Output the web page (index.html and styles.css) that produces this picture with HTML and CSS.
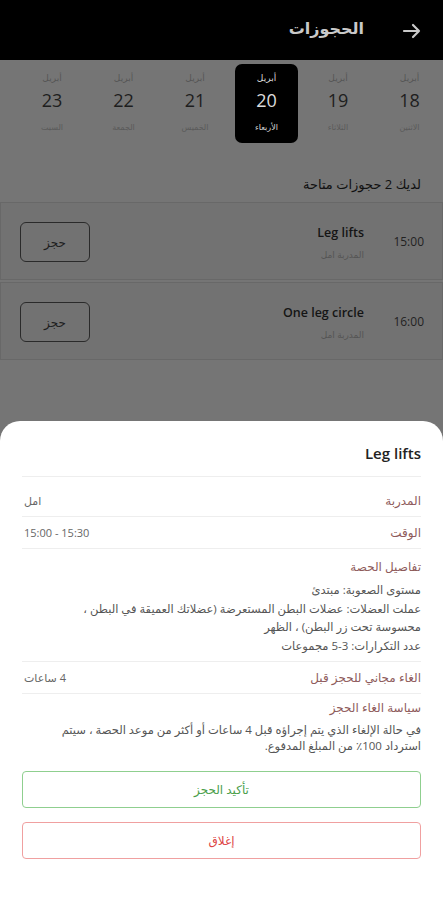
FILE: index.html
```html
<!DOCTYPE html>
<html lang="ar" dir="rtl">
<head>
    <meta charset="UTF-8">
    <meta name="viewport" content="width=device-width, initial-scale=1.0">
    <title>الحجوزات</title>
    <link rel="stylesheet" href="styles.css">
</head>
<body>
<div class="app">
    <div class="topbar">
        <svg class="back" width="20" height="20" viewBox="0 0 20 20"><path d="M2 10h15M11 4l6 6-6 6" fill="none" stroke="#c9c9c9" stroke-width="2.2" stroke-linecap="round" stroke-linejoin="round"/></svg>
        <h1>الحجوزات</h1>
    </div>

    <div class="dates">
        <div class="day"><span class="month">أبريل</span><span class="num">18</span><span class="name">الاثنين</span></div>
        <div class="day"><span class="month">أبريل</span><span class="num">19</span><span class="name">الثلاثاء</span></div>
        <div class="day active"><span class="month">أبريل</span><span class="num">20</span><span class="name">الأربعاء</span></div>
        <div class="day"><span class="month">أبريل</span><span class="num">21</span><span class="name">الخميس</span></div>
        <div class="day"><span class="month">أبريل</span><span class="num">22</span><span class="name">الجمعة</span></div>
        <div class="day"><span class="month">أبريل</span><span class="num">23</span><span class="name">السبت</span></div>
    </div>

    <p class="count">لديك 2 حجوزات متاحة</p>

    <div class="sessions">
        <div class="session">
            <span class="time">15:00</span>
            <div class="info">
                <div class="title" dir="ltr">Leg lifts</div>
                <div class="coach">المدربة امل</div>
            </div>
            <button class="book">حجز</button>
        </div>
        <div class="session">
            <span class="time">16:00</span>
            <div class="info">
                <div class="title" dir="ltr">One leg circle</div>
                <div class="coach">المدربة امل</div>
            </div>
            <button class="book">حجز</button>
        </div>
    </div>
</div>

<div class="sheet">
    <h2 dir="ltr">Leg lifts</h2>
    <div class="row first">
        <span class="label">المدربة</span>
        <span class="value">امل</span>
    </div>
    <div class="row">
        <span class="label">الوقت</span>
        <span class="value" dir="ltr">15:00 - 15:30</span>
    </div>
    <div class="block details">
        <div class="label">تفاصيل الحصة</div>
        <p>مستوى الصعوبة: مبتدئ<br>
        عملت العضلات: عضلات البطن المستعرضة (عضلاتك العميقة في البطن ،<br>
        محسوسة تحت زر البطن) ، الظهر<br>
        عدد التكرارات: 3-5 مجموعات</p>
    </div>
    <div class="row">
        <span class="label">الغاء مجاني للحجز قبل</span>
        <span class="value">4 ساعات</span>
    </div>
    <div class="block policy">
        <div class="label">سياسة الغاء الحجز</div>
        <p>في حالة الإلغاء الذي يتم إجراؤه قبل 4 ساعات أو أكثر من موعد الحصة ، سيتم<br>
        استرداد 100٪ من المبلغ المدفوع.</p>
    </div>
    <button class="btn confirm">تأكيد الحجز</button>
    <button class="btn close">إغلاق</button>
</div>
</body>
</html>
```
FILE: styles.css
```css
body {
    margin: 0;
    font-family: "Open Sans", "DejaVu Sans", sans-serif;
    background-color: #757575;
    color: #1e1e1e;
}
.app {
    height: 900px;
    background-color: #757575;
}
.topbar {
    height: 60px;
    background-color: #000;
    display: flex;
    align-items: center;
    padding-right: 21px;
    gap: 38px;
}
.topbar h1 {
    margin: 0 0 4px 0;
    font-size: 16px;
    font-weight: 700;
    color: #c9c9c9;
}
.back {
    transform: translateY(1px);
}

/* date strip */
.dates {
    display: flex;
    gap: 8.5px;
    padding: 4px 2px 0 0;
    height: 86px;
}
.day {
    width: 63px;
    height: 79px;
    border-radius: 7px;
    display: flex;
    flex-direction: column;
    align-items: center;
    box-sizing: border-box;
    padding-top: 7px;
}
.day .month {
    font-size: 9px;
    color: #555;
    line-height: 13px;
}
.day .num {
    font-size: 18px;
    line-height: 24px;
    margin-top: 4px;
    color: #1e1e1e;
}
.day .name {
    font-size: 8px;
    color: #5a5a5a;
    line-height: 12px;
    margin-top: 9px;
}
.day.active {
    background-color: #000;
}
.day.active .month,
.day.active .name {
    color: #d8d8d8;
}
.day.active .num {
    color: #dcdcdc;
}

.count {
    margin: 0;
    padding: 25px 22px 0 0;
    height: 27px;
    font-size: 13px;
    font-weight: 400;
    color: #111;
}

/* session list */
.sessions {
    display: flex;
    flex-direction: column;
    gap: 2px;
}
.session {
    height: 76px;
    border: 1px solid #686868;
    background-color: #727272;
    display: flex;
    align-items: center;
    padding: 0 18px 0 19px;
}
.time {
    width: 60px;
    font-size: 12px;
    color: #222;
    margin-top: 1px;
}
.info {
    flex: 1;
    margin-top: 3px;
}
.info .title {
    text-align: right;
    font-size: 12.5px;
    font-weight: 600;
    color: #151515;
    line-height: 18px;
}
.info .coach {
    font-size: 9px;
    color: #555;
    margin-top: 6px;
}
.book {
    width: 70px;
    height: 40px;
    border: 1px solid #2a2a2a;
    border-radius: 6px;
    background: transparent;
    font-family: inherit;
    font-size: 12px;
    color: #1e1e1e;
    margin-top: 2px;
}

/* bottom sheet */
.sheet {
    position: fixed;
    left: 0;
    right: 0;
    bottom: 0;
    top: 421px;
    background-color: #fff;
    border-radius: 20px 20px 0 0;
    padding: 22px 22px 0 22px;
    box-sizing: border-box;
}
.sheet h2 {
    margin: 0;
    text-align: right;
    font-size: 15px;
    font-weight: 600;
    color: #222;
    line-height: 20px;
    padding-bottom: 13px;
    border-bottom: 1px solid #eee;
}
.row {
    display: flex;
    justify-content: space-between;
    align-items: center;
    padding: 6px 0;
    line-height: 19px;
    border-bottom: 1px solid #eee;
}
.row.first {
    padding-top: 14px;
}
.label {
    font-size: 12px;
    color: #8e5b5b;
}
.value {
    font-size: 11px;
    color: #666;
    padding-left: 2px;
}
.block {
    border-bottom: 1px solid #eee;
}
.block .label {
    line-height: 19px;
}
.block p {
    margin: 0;
    font-size: 11.5px;
    color: #555;
}
.details .label {
    padding-top: 8px;
}
.details p {
    margin-top: 5px;
    line-height: 18.7px;
    padding-bottom: 5px;
}
.policy {
    border-bottom: none;
}
.policy .label {
    padding-top: 4px;
}
.policy p {
    margin-top: 5px;
    line-height: 16px;
}
.btn {
    display: block;
    width: 100%;
    height: 37px;
    background: #fff;
    border-radius: 4px;
    font-family: inherit;
    font-size: 12px;
}
.confirm {
    margin-top: 17px;
    border: 1px solid #8fcf8f;
    color: #4a9e4a;
}
.close {
    margin-top: 14px;
    border: 1px solid #f0a0a0;
    color: #dd4444;
}
```
